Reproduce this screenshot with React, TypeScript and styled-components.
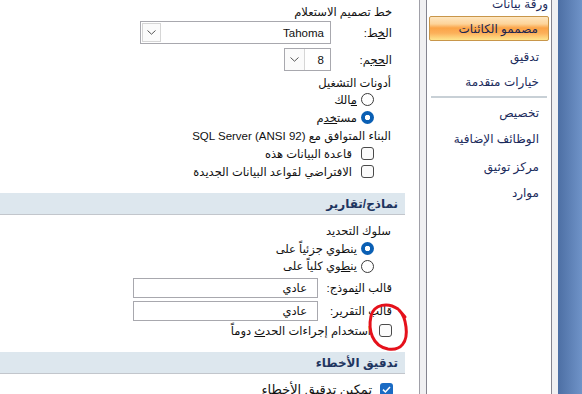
import React from 'react';
import styled, { createGlobalStyle } from 'styled-components';

const Global = createGlobalStyle`
  html, body { margin: 0; padding: 0; background: #fff; }
  body { font-family: "Liberation Sans", "DejaVu Sans", sans-serif; }
`;

const Frame = styled.div`
  width: 582px;
  height: 394px;
  overflow: hidden;
  display: flex;
  background: #f0f0f2;
`;

const Content = styled.div`
  width: 419px;
  height: 100%;
  flex: none;
  background: #fff;
  border-right: 1px solid #a0a0a8;
`;

const ContentInner = styled.div`
  width: 405px;
  direction: rtl;
  display: flex;
  flex-direction: column;
  font-size: 11.5px;
  color: #111;
`;

const Gutter = styled.div`
  width: 6px;
  flex: none;
  background: #f0f0f2;
`;

const Row = styled.div<{ $h: number; $mt?: number; $pr: number; $gap?: number; $fs?: number }>`
  display: flex;
  align-items: center;
  height: ${p => p.$h}px;
  margin-top: ${p => p.$mt ?? 0}px;
  padding-right: ${p => p.$pr}px;
  gap: ${p => p.$gap ?? 0}px;
  white-space: nowrap;
  ${p => (p.$fs ? `font-size: ${p.$fs}px;` : '')}
`;

const Label = styled.span<{ $w: number }>`
  width: ${p => p.$w}px;
  flex: none;
  text-align: right;
`;

const ComboBox = styled.div<{ $w: number; $h: number }>`
  width: ${p => p.$w}px;
  height: ${p => p.$h}px;
  box-sizing: border-box;
  border: 1px solid #a8a8ae;
  background: #fff;
  display: flex;
  align-items: center;
  justify-content: space-between;
`;

const ComboText = styled.span<{ $pr: number }>`
  padding-right: ${p => p.$pr}px;
`;

const DropButton = styled.span<{ $w: number; $framed?: boolean }>`
  width: ${p => p.$w}px;
  height: 100%;
  box-sizing: border-box;
  display: flex;
  align-items: center;
  justify-content: center;
  background: #fbfbfb;
  border-right: 1px solid #d6d6d6;
  ${p => (p.$framed ? 'border: 1px solid #d6d6d6; height: calc(100% - 2px); margin-left: 1px;' : '')}
`;

const Radio = styled.span<{ $on?: boolean }>`
  width: 13px;
  height: 13px;
  flex: none;
  box-sizing: border-box;
  border-radius: 50%;
  ${p =>
    p.$on
      ? 'background: radial-gradient(circle, #fff 0 2.4px, #0a5fb4 3px);'
      : 'border: 1px solid #3a3a3a; background: #fff;'}
`;

const Check = styled.span<{ $on?: boolean }>`
  width: 13px;
  height: 13px;
  flex: none;
  box-sizing: border-box;
  border-radius: 3px;
  display: flex;
  align-items: center;
  justify-content: center;
  ${p =>
    p.$on
      ? 'background: #1a6bc4;'
      : 'border: 1px solid #4a4a4a; background: #fbfbfb;'}
`;

const SectionHeader = styled.div<{ $mt: number }>`
  height: 21px;
  margin-top: ${p => p.$mt}px;
  background: #dde7ee;
  border-bottom: 1px solid #c2c6cc;
  display: flex;
  align-items: center;
  padding-right: 7px;
  font-weight: bold;
  font-size: 12px;
  color: #1f3560;
`;

const Nav = styled.div`
  width: 124px;
  flex: none;
  height: 100%;
  background: #fff;
  border-left: 1px solid #84848f;
  border-right: 1px solid #84848f;
  direction: rtl;
  display: flex;
  flex-direction: column;
  font-size: 12px;
  color: #1b2b5c;
`;

const NavItem = styled.div<{ $h: number; $mt?: number; $pr?: number; $sel?: boolean }>`
  height: ${p => p.$h}px;
  margin-top: ${p => p.$mt ?? 0}px;
  display: flex;
  align-items: center;
  white-space: nowrap;
  flex: none;
  box-sizing: border-box;
  padding-right: ${p => p.$pr ?? 12}px;
  ${p =>
    p.$sel
      ? `
    margin-left: 2px;
    margin-right: 2px;
    padding-right: 10px;
    border: 1px solid #c8964a;
    border-radius: 2px;
    color: #1a2550;
    background: linear-gradient(to bottom, #fee6c0 0%, #fdd49a 30%, #fba447 48%, #fcb05a 70%, #fee58e 100%);
  `
      : ''}
`;

const NavSep = styled.div<{ $mt: number }>`
  height: 2px;
  margin: ${p => p.$mt}px 4px 0 4px;
  background: #c8d0d6;
  flex: none;
`;

const BlueEdge = styled.div`
  flex: 1;
  background: linear-gradient(to right, #4d6fa4, #6f93c8);
`;

const Annotation = styled.svg`
  position: absolute;
  left: 0;
  top: 0;
  pointer-events: none;
`;

const Stage = styled.div`
  position: relative;
  width: 582px;
  height: 394px;
`;

const Chevron = () => (
  <svg width="9" height="5" viewBox="0 0 9 5">
    <path d="M0.5 0.5 L4.5 4.2 L8.5 0.5" fill="none" stroke="#555" strokeWidth="1" />
  </svg>
);

const Tick = () => (
  <svg width="11" height="11" viewBox="0 0 11 11">
    <path d="M2 5.6 L4.4 8 L9 3" fill="none" stroke="#fff" strokeWidth="1.5" />
  </svg>
);

export default function App() {
  return (
    <>
      <Global />
      <Stage>
        <Frame>
          <Content>
            <ContentInner>
              <Row $h={18} $mt={3} $pr={13}>خط تصميم الاستعلام</Row>
              <Row $h={23} $pr={13}>
                <Label $w={61}>ال<u>خ</u>ط:</Label>
                <ComboBox $w={191} $h={23}>
                  <ComboText $pr={6}>Tahoma</ComboText>
                  <DropButton $w={19} $framed>
                    <Chevron />
                  </DropButton>
                </ComboBox>
              </Row>
              <Row $h={23} $mt={4} $pr={13}>
                <Label $w={61}>ال<u>حج</u>م:</Label>
                <ComboBox $w={47} $h={23}>
                  <ComboText $pr={6}>8</ComboText>
                  <DropButton $w={20}>
                    <Chevron />
                  </DropButton>
                </ComboBox>
              </Row>
              <Row $h={17} $mt={3} $pr={14}>أدونات التشغيل</Row>
              <Row $h={17} $pr={31} $gap={4}>
                <Radio />
                <span><u>م</u>الك</span>
              </Row>
              <Row $h={19} $pr={31} $gap={4}>
                <Radio $on />
                <span>مست<u>خد</u>م</span>
              </Row>
              <Row $h={18} $pr={14}>البناء المتوافق مع SQL Server (ANSI 92)</Row>
              <Row $h={17} $pr={31} $gap={9}>
                <Check />
                <span>قاعدة البيانات هذه</span>
              </Row>
              <Row $h={19} $pr={31} $gap={9}>
                <Check />
                <span>الافتراضي لقواعد البيانات الجديدة</span>
              </Row>
              <SectionHeader $mt={12}>نماذج/تقارير</SectionHeader>
              <Row $h={18} $mt={7} $pr={14}>سلوك التحديد</Row>
              <Row $h={17} $pr={31} $gap={4}>
                <Radio $on />
                <span>ينطوي جزئياً على</span>
              </Row>
              <Row $h={18} $pr={31} $gap={4}>
                <Radio />
                <span>ين<u>ط</u>وي كلياً على</span>
              </Row>
              <Row $h={20} $mt={3} $pr={13}>
                <Label $w={74}>قالب ال<u>ن</u>موذج:</Label>
                <ComboBox $w={185} $h={20}>
                  <ComboText $pr={10}>عادي</ComboText>
                </ComboBox>
              </Row>
              <Row $h={20} $mt={3} $pr={13}>
                <Label $w={74}>قالب التقرير:</Label>
                <ComboBox $w={185} $h={20}>
                  <ComboText $pr={10}>عادي</ComboText>
                </ComboBox>
              </Row>
              <Row $h={19} $pr={13} $gap={8}>
                <Check />
                <span>استخدام إجراءات الحد<u>ث</u> دوماً</span>
              </Row>
              <SectionHeader $mt={12}>تدقيق الأخطاء</SectionHeader>
              <Row $h={18} $mt={6} $pr={12} $gap={8} $fs={13}>
                <Check $on>
                  <Tick />
                </Check>
                <span>تمكين تدقيق الأخطاء</span>
              </Row>
            </ContentInner>
          </Content>
          <Gutter />
          <Nav>
            <NavItem $h={25} $mt={-9} $pr={3}>ورقة بيانات</NavItem>
            <NavItem $h={25} $sel>مصممو الكائنات</NavItem>
            <NavItem $h={26} $mt={3}>تدقيق</NavItem>
            <NavItem $h={24}>خيارات متقدمة</NavItem>
            <NavSep $mt={2} />
            <NavItem $h={26} $mt={2}>تخصيص</NavItem>
            <NavItem $h={26}>الوظائف الإضافية</NavItem>
            <NavItem $h={26} $mt={2}>مركز توثيق</NavItem>
            <NavItem $h={26}>موارد</NavItem>
          </Nav>
          <Gutter />
          <BlueEdge />
        </Frame>
        <Annotation width="582" height="394" viewBox="0 0 582 394">
          <path
            d="M398 309 C388 302, 374 304, 371 316 C368 330, 372 346, 388 349 C401 351, 408 342, 406 327 C405 318, 402 313, 399 310 M399 310 L405 317"
            fill="none"
            stroke="#e5111b"
            strokeWidth="3"
            strokeLinecap="round"
            strokeLinejoin="round"
          />
        </Annotation>
      </Stage>
    </>
  );
}
